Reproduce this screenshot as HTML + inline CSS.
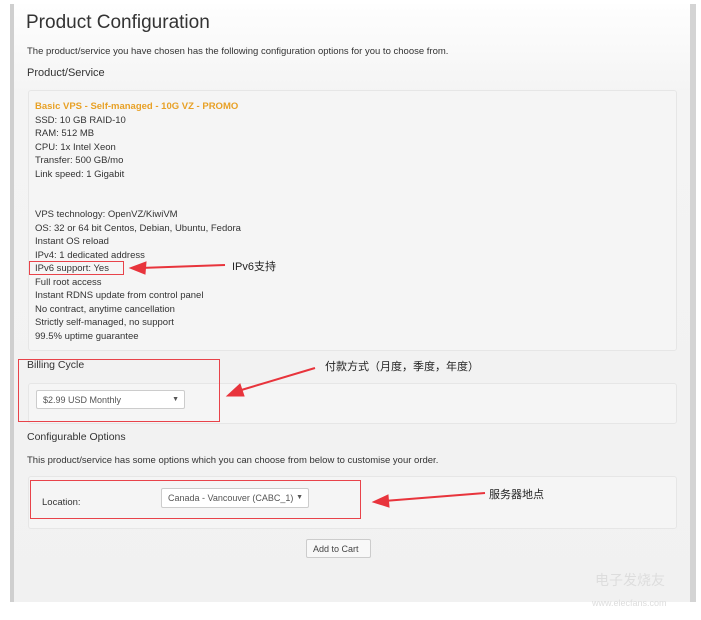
<!DOCTYPE html>
<html><head><meta charset="utf-8"><style>
body{margin:0;width:701px;height:620px;background:#fff;position:relative;overflow:hidden;font-family:"Liberation Sans","Noto Sans CJK SC",sans-serif;}
.pg{position:absolute;left:10px;top:4px;width:686px;height:598px;background:linear-gradient(#fefefe 0,#f4f4f4 90px,#f1f1f1 100%);}
.lb{position:absolute;left:10px;top:4px;width:4px;height:598px;background:#cfcfcf}
.rb{position:absolute;left:690px;top:4px;width:6px;height:598px;background:#d4d4d4}
.t{position:absolute;white-space:nowrap;color:#333}
.box{position:absolute;left:28px;width:647px;background:#f5f5f5;border:1px solid #e6e6e6;border-radius:3px}
.s{font-size:9.5px;}
.red{position:absolute;border:1px solid #e8434a}
.sel{position:absolute;background:#fff;border:1px solid #ccc;border-radius:2px;font-size:9px;color:#555;box-sizing:border-box;padding:4px 6px}
.cn{font-size:11px;color:#222}
</style></head><body>
<div class="pg"></div><div class="lb"></div><div class="rb"></div>
<div class="t" style="left:26px;top:12px;font-size:19px;color:#333">Product Configuration</div>
<div class="t s" style="left:27px;top:46px">The product/service you have chosen has the following configuration options for you to choose from.</div>
<div class="t" style="left:27px;top:67px;font-size:11px">Product/Service</div>
<div class="box" style="top:90px;height:259px"></div>
<div class="t s" style="left:35px;top:100px;line-height:13.5px">
<b style="color:#e8a126">Basic VPS - Self-managed - 10G VZ - PROMO</b><br>SSD: 10 GB RAID-10<br>RAM: 512 MB<br>CPU: 1x Intel Xeon<br>Transfer: 500 GB/mo<br>Link speed: 1 Gigabit<br><br><br>VPS technology: OpenVZ/KiwiVM<br>OS: 32 or 64 bit Centos, Debian, Ubuntu, Fedora<br>Instant OS reload<br>IPv4: 1 dedicated address<br>IPv6 support: Yes<br>Full root access<br>Instant RDNS update from control panel<br>No contract, anytime cancellation<br>Strictly self-managed, no support<br>99.5% uptime guarantee</div>
<div class="red" style="left:29px;top:261px;width:93px;height:12px"></div>
<div class="t cn" style="left:232px;top:258px">IPv6支持</div>
<div class="t" style="left:27px;top:359px;font-size:10.5px">Billing Cycle</div>
<div class="box" style="top:383px;height:39px"></div>
<div class="sel" style="left:36px;top:390px;width:149px;height:19px">$2.99 USD Monthly<span style="position:absolute;right:5px;font-size:7px;top:5px">▼</span></div>
<div class="red" style="left:18px;top:359px;width:200px;height:61px"></div>
<div class="t cn" style="left:325px;top:358px">付款方式（月度，季度，年度）</div>
<div class="t" style="left:27px;top:431px;font-size:10.5px">Configurable Options</div>
<div class="t s" style="left:27px;top:455px">This product/service has some options which you can choose from below to customise your order.</div>
<div class="box" style="top:476px;height:51px"></div>
<div class="t s" style="left:42px;top:497px">Location:</div>
<div class="sel" style="left:161px;top:488px;width:148px;height:20px">Canada - Vancouver (CABC_1)<span style="position:absolute;right:5px;font-size:7px;top:5px">▼</span></div>
<div class="red" style="left:30px;top:480px;width:329px;height:37px"></div>
<div class="t cn" style="left:489px;top:486px">服务器地点</div>
<div class="sel" style="left:306px;top:539px;width:65px;height:19px;background:#f8f8f8;color:#444">Add to Cart</div>
<svg style="position:absolute;left:0;top:0" width="701" height="620">
<g fill="#e8343c" stroke="#e8343c">
<line x1="225" y1="265" x2="140" y2="268" stroke-width="2"/><polygon points="130,268 146,262 145,274"/>
<line x1="315" y1="368" x2="238" y2="391" stroke-width="2"/><polygon points="227,396 240,384 244,396"/>
<line x1="485" y1="493" x2="384" y2="501" stroke-width="2"/><polygon points="373,502 388,495 389,507"/>
</g>
<text x="595" y="585" font-size="14" fill="#ddd" font-family="Noto Sans CJK SC">电子发烧友</text>
<text x="592" y="606" font-size="9" fill="#ddd" font-family="Liberation Sans">www.elecfans.com</text>
</svg>
</body></html>
